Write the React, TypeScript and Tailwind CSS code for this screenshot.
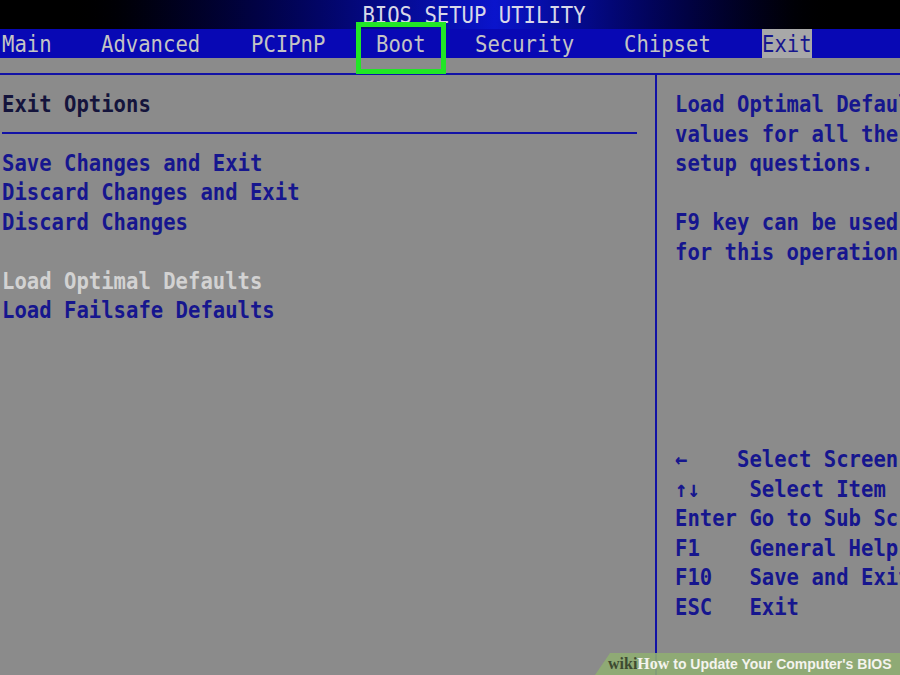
import React from "react";

const menu = [
  { label: "Main", x: "w-[99px]" },
  { label: "Advanced", x: "w-[150px]" },
  { label: "PCIPnP", x: "w-[125px]" },
  { label: "Boot", x: "w-[99px]" },
  { label: "Security", x: "w-[149px]" },
  { label: "Chipset", x: "w-[138px]" },
];

const options = [
  { text: "Save Changes and Exit" },
  { text: "Discard Changes and Exit" },
  { text: "Discard Changes" },
  { text: "" },
  { text: "Load Optimal Defaults", active: true },
  { text: "Load Failsafe Defaults" },
];

const help = [
  "Load Optimal Defaults",
  "values for all the",
  "setup questions.",
  "",
  "F9 key can be used",
  "for this operation",
];

const keys = [
  "←    Select Screen",
  "↑↓    Select Item",
  "Enter Go to Sub Screen",
  "F1    General Help",
  "F10   Save and Exit",
  "ESC   Exit",
];

const Line = ({ children, className = "" }: { children: React.ReactNode; className?: string }) => (
  <div className={`h-[29.5px] leading-[29.5px] whitespace-pre ${className}`}>
    <span className="inline-block origin-center scale-y-110">{children || " "}</span>
  </div>
);

export default function App() {
  return (
    <div className="relative w-[900px] h-[675px] overflow-hidden bg-[#8b8b8b] font-['DejaVu_Sans_Mono',monospace] text-[20.6px] text-[#16168e]">
      {/* title bar */}
      <div className="h-[29px] overflow-hidden bg-linear-to-r from-black from-6% via-[#0a14cc] via-55% to-black to-94% flex justify-center">
        <div className="mt-[1px] ml-[48px] leading-[29px] text-[#d8d8e8]">
          <span className="inline-block scale-y-110">BIOS SETUP UTILITY</span>
        </div>
      </div>

      {/* menu bar */}
      <div className="h-[29px] bg-[#0808b4] flex text-[#c4c4c4] leading-[31px] pl-[2px]">
        {menu.map((m) => (
          <div key={m.label} className={`${m.x} shrink-0`}>
            <span className="inline-block scale-y-110">{m.label}</span>
          </div>
        ))}
        <div className="bg-[#a8a8a8] text-[#16168e]">
          <span className="inline-block scale-y-110">Exit</span>
        </div>
      </div>

      <div className="h-[15px]" />
      <div className="h-[2px] bg-[#1212a6]" />

      <div className="flex h-[600px] font-bold">
        {/* left panel */}
        <div className="w-[655px] shrink-0 pt-[15px] pl-[2px]">
          <Line className="text-[#14143c]">Exit Options</Line>
          <div className="h-[2px] bg-[#1212a6] w-[635px] mt-[12px] mb-[15px]" />
          {options.map((o, i) => (
            <Line key={i} className={o.active ? "text-[#d2d2d2]" : ""}>
              {o.text}
            </Line>
          ))}
        </div>

        <div className="w-[2px] shrink-0 bg-[#1212a6]" />

        {/* right panel */}
        <div className="flex-1 overflow-hidden pl-[18px] pt-[15px]">
          {help.map((h, i) => (
            <Line key={i}>{h}</Line>
          ))}
          <div className="h-[178px]" />
          {keys.map((k, i) => (
            <Line key={i}>{k}</Line>
          ))}
        </div>
      </div>

      {/* highlight box around Boot */}
      <div className="absolute left-[356px] top-[22px] w-[90px] h-[52px] border-[5px] border-[#22e626]" />

      {/* watermark */}
      <div className="absolute right-0 bottom-0 w-[305px] h-[22px] bg-[#8fad72]/90 [clip-path:polygon(15px_0,100%_0,100%_100%,0_100%)] flex items-center pl-[13px] whitespace-nowrap">
        <span className="font-['Liberation_Serif',serif] font-bold text-[16px] text-[#3d4a30]">wiki</span>
        <span className="font-['Liberation_Serif',serif] font-bold text-[16px] text-[#f4f4ee]">How</span>
        <span className="font-['Liberation_Sans',sans-serif] font-bold text-[14px] text-[#f4f4ee]">&nbsp;to Update Your Computer's BIOS</span>
      </div>
    </div>
  );
}
